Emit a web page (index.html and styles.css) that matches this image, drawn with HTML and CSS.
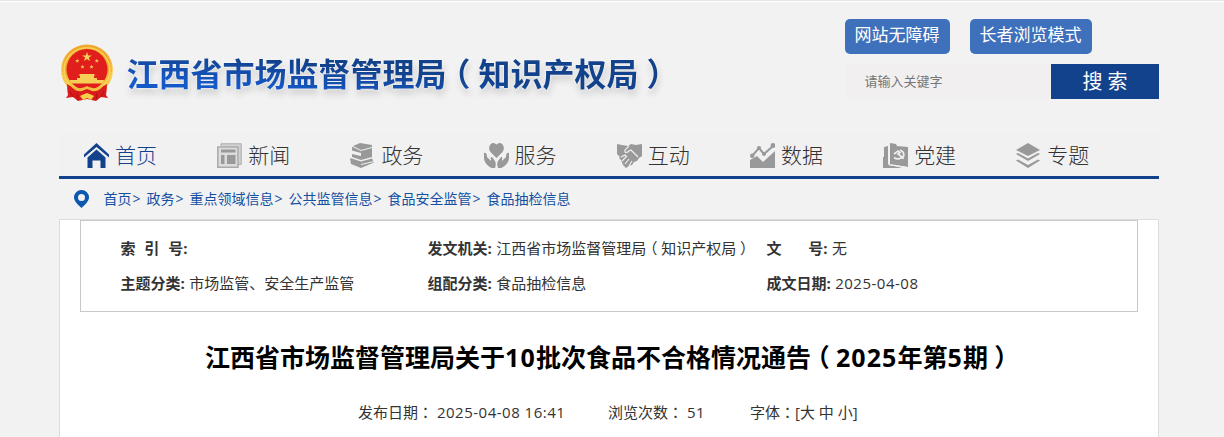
FILE: index.html
```html
<!DOCTYPE html>
<html lang="zh-CN">
<head>
<meta charset="utf-8">
<title>江西省市场监督管理局</title>
<link rel="stylesheet" href="styles.css">
</head>
<body>
<div class="topline"></div>
<div class="page">
  <header class="header">
    <div class="brand">
      <svg class="emblem" viewBox="0 0 54 58">
        <defs>
          <radialGradient id="gold" cx=".5" cy=".4" r=".6"><stop offset=".7" stop-color="#f0a92c"/><stop offset=".86" stop-color="#fbd65c"/><stop offset="1" stop-color="#eeaa2e"/></radialGradient>
          <path id="star" d="M0-5 1.2-1.6 4.8-1.6 1.9.6 3 4 0 1.9-3 4-1.9.6-4.8-1.6-1.2-1.6z"/>
        </defs>
        <path d="M7 37 8 51 6 54 13 53 18 57 27 55 36 57 41 53 48 54 46 51 47 37z" fill="#d91b1b"/>
        <ellipse cx="27" cy="26" rx="26" ry="25.5" fill="url(#gold)"/>
        <ellipse cx="27" cy="26" rx="22.8" ry="22.3" fill="none" stroke="#f9cf55" stroke-width="1.500"/>
        <ellipse cx="27" cy="26" rx="24.500" ry="24" fill="none" stroke="#e9a42b" stroke-width=".6" stroke-dasharray="2 1.5"/>
        <circle cx="27" cy="25.5" r="20.5" fill="#e01f1c"/>
        <g fill="#f6cf57">
          <use href="#star" x="27" y="13"/>
          <use href="#star" transform="translate(17.3 17) scale(.45)"/>
          <use href="#star" transform="translate(36.8 17) scale(.45)"/>
          <use href="#star" transform="translate(22.5 23) scale(.45)"/>
          <use href="#star" transform="translate(31.5 23) scale(.45)"/>
          <path d="M20 30h14l1.500 1.500h-1.500v2.500h3v2H17v-2h3v-2.500h-1.500zM9.500 36h35l-2 3.500h-31z"/>
        </g>
        <path d="M7 40c5 3 10 6 17 5l3-2 3 2c7 1 12-2 17-5l-1 11c-5 2-10 2-14 1l-5 3-5-3c-4 1-9 1-14-1z" fill="#d91c1b"/>
        <path d="M9 39c5 5 11 7 18 3 7 4 13 2 18-3-3 6-8 9-13 8l-5-2-5 2c-5 1-10-2-13-8z" fill="#f3bd42"/>
        <path d="M22 51l5-2 5 2 2 1-3 4-4-2-4 2-3-4z" fill="#f7cf4a"/>
        <path d="M10 47l3 6M44 47l-3 6M17 49l1 7M37 49l-1 7" stroke="#a91515" fill="none"/>
      </svg>
      <h1 class="site-name">江西省市场监督管理局<span class="paren">（</span>知识产权局<span class="paren">）</span></h1>
    </div>
    <div class="tools">
      <div class="modes"><a class="mode">网站无障碍</a><a class="mode">长者浏览模式</a></div>
      <div class="search"><span class="search-input">请输入关键字</span><span class="search-button">搜 索</span></div>
    </div>
  </header>

  <nav class="nav">
    <a class="nav-item active"><svg class="icon" viewBox="0 0 25 25"><path d="M12.500 0 25 11.500 25 14.500 12.500 4 0 14.500 0 11.500z"/><path d="M12.500 6.500 21.500 14.500V25H16.500V17.500H8.500V25H3.500V14.500z"/></svg>首页</a>
    <a class="nav-item"><svg class="icon" viewBox="0 0 25 25"><path d="M4 3V.8h20.200v20.700H21" fill="#d2d2d2" stroke="#aaa"/><path d="M.8 4h20.200v20.200H.8z" fill="#dcdcdc" stroke="#aaa" stroke-width="1.500"/><path d="M4 6.500h14.500v3H4zM4 12h3.500v9H4zM10 12h8.500v9H10z"/></svg>新闻</a>
    <a class="nav-item"><svg class="icon" viewBox="0 0 25 25"><path d="M10 0 22 2v12L11 17 2 14v-3l9 2V10L2 7.500V5l1-2z"/><path d="M3 3.500 11 7.500l11-3M2 8.500l9 3" fill="none" stroke="#f1f1f1"/><path d="M0 15l11 3.500 11-3 2 4-13 5.500L1 21z"/><path d="M11 21.500 24 18.500" stroke="#f1f1f1"/></svg>政务</a>
    <a class="nav-item"><svg class="icon" viewBox="0 0 25 25"><path d="M12.500 15 6.500 9C3.500 5 6-.5 10 0l2.500 1.500L15 0c4-.5 6.500 5 3.500 9z"/><path d="M0 10c2-1 3 1 3 4l4 4c0-3-1-4 1-4l3 4c1 2 1 4 0 7H8c-3-1-8-5-8-10zM25 10c-2-1-3 1-3 4l-4 4c0-3 1-4-1-4l-3 4c-1 2-1 4 0 7h3c3-1 8-5 8-10z"/></svg>服务</a>
    <a class="nav-item"><svg class="icon" viewBox="0 0 25 25"><path d="M0 1 5 2l6 1 3-2 5 1 6-1v12l-3 2-2 3-3 1-2 3-3 1-3 2-3-3-2-5-2-2 1-1-3-3z"/><path d="M12 3 8 7c-1 3 2 3 4 1l2-1 7 7M4 14l4-2 2 2M5 18l4-4M8 21l4-5M12 23l3-5" fill="none" stroke="#f1f1f1" stroke-width="1.100"/></svg>互动</a>
    <a class="nav-item"><svg class="icon" viewBox="0 0 25 25"><path d="M0 25V17l7-4 6 6L25 8v17z"/><path d="M2 13 9 5l5 6L23 3" fill="none" stroke="#999" stroke-width="2"/><circle cx="2.200" cy="12.800" r="2.200"/><circle cx="9" cy="5" r="2"/><circle cx="14" cy="11" r="2"/><circle cx="23" cy="2.500" r="2.400"/></svg>数据</a>
    <a class="nav-item"><svg class="icon" viewBox="0 0 25 25"><path d="M0 25V14h1V4l4-1v18l14 4zM7 0l6 1 1 2 11 1v20L7 21z"/><path d="M6 1v21l19 2.500" fill="none" stroke="#f1f1f1"/><path d="M11 11l4-3 2 1.500-2 1.500 6 4.500M17 7c5 2 5 7 1 8-2 1-5 1-7-.5" fill="none" stroke="#f1f1f1" stroke-width="1.600"/></svg>党建</a>
    <a class="nav-item"><svg class="icon" viewBox="0 0 25 25"><path d="M12 0 24 7 12 13 0 7zM0 11l2-1 10 5.500L22 10l2 1-12 7zM0 17.500l2-1 10 5.500 10-5.500 2 1L12 25z"/></svg>专题</a>
  </nav>

  <div class="crumbs">
    <svg class="pin" viewBox="0 0 15 18"><path fill-rule="evenodd" d="M7.500 0A7.400 7.400 0 0 0 0 7.500C0 11 4 15 7.500 18 11 15 15 11 15 7.500A7.400 7.400 0 0 0 7.500 0zm0 4a3.500 3.500 0 1 1 0 7 3.500 3.500 0 0 1 0-7z"/></svg>
    <a>首页</a><i>&gt;</i><a>政务</a><i>&gt;</i><a>重点领域信息</a><i>&gt;</i><a>公共监管信息</a><i>&gt;</i><a>食品安全监管</a><i>&gt;</i><a>食品抽检信息</a>
  </div>

  <main class="article">
    <div class="info">
      <div><b class="spread wide"><span>索</span><span>引</span><span>号:</span></b></div>
      <div><b>发文机关:</b> 江西省市场监督管理局<span class="paren">（</span>知识产权局<span class="paren">）</span></div>
      <div><b class="spread"><span>文</span><span>号:</span></b> 无</div>
      <div><b>主题分类:</b> 市场监管、安全生产监管</div>
      <div><b>组配分类:</b> 食品抽检信息</div>
      <div><b>成文日期:</b> <span class="num">2025-04-08</span></div>
    </div>
    <h2 class="title">江西省市场监督管理局关于<span class="num">10</span>批次食品不合格情况通告<span class="paren">（</span><span class="num">2025</span>年第<span class="num">5</span>期<span class="paren">）</span></h2>
    <div class="meta">
      <span class="date">发布日期<span class="colon" lang="zh-TW">：</span> <span class="num">2025-04-08 16:41</span></span>
      <span class="views">浏览次数<span class="colon" lang="zh-TW">：</span> <span class="num">51</span></span>
      <span>字体<span class="colon" lang="zh-TW">：</span>[大 中 小]</span>
    </div>
  </main>
</div>
</body>
</html>
```
FILE: styles.css
```css
* { box-sizing: border-box; }
body {
  margin: 0;
  height: 437px;
  overflow: hidden;
  background: #f2f2f2;
  color: #333;
  font-family: "Open Sans", "Noto Sans CJK SC", sans-serif;
}
.topline { height: 2px; background: #e1e6eb; border-bottom: 1px solid #fff; }
.page { width: 1100px; margin-left: 59px; }

.header { display: flex; justify-content: space-between; height: 130px; }
.brand { display: flex; padding: 42px 0 0 1px; }
.emblem { width: 54px; height: 58px; }
.site-name {
  height: 60px;
  margin: 0 0 0 12.500px;
  font-size: 32px;
  line-height: 60px;
  font-weight: 700;
  white-space: nowrap;
  color: transparent;
  background: linear-gradient(185deg, #13428c 48%, #1558c8 74%);
  background-clip: text;
  -webkit-background-clip: text;
  filter: drop-shadow(0 0 1px #fff) drop-shadow(1px 5px 3px rgba(0, 0, 0, .14));
}
.tools { width: 314px; padding-top: 17px; }
.modes { display: flex; gap: 20px; }
.mode {
  height: 35px;
  padding: 0 10.500px 0 9.500px;
  border-radius: 5px;
  background: #3f70bb;
  color: #fff;
  font-size: 17px;
  line-height: 32px;
}
.search { display: flex; height: 35px; margin-top: 10px; }
.search-input { width: 206px; padding-left: 19.500px; background: #f1eff0; color: #757575; font-size: 13px; line-height: 35px; }
.search-button { flex: 1; background: #13428c; color: #fff; font-size: 20px; line-height: 35px; text-align: center; }

.nav {
  display: grid;
  grid-template-columns: repeat(8, 133.2px);
  height: 47px;
  padding-left: 25px;
  border-bottom: 3px solid #13428c;
  background: #f1f1f1;
}
.nav-item { display: flex; align-items: flex-start; gap: 6px; padding-top: 11px; font-size: 21px; font-weight: 300; line-height: 25px; }
.icon { width: 25px; height: 25px; fill: #999; }
.active { color: #13428c; }
.active .icon { fill: #13428c; }

.crumbs { display: flex; height: 40px; padding-left: 15px; color: #1250a2; font-size: 14px; line-height: 40px; }
.pin { width: 15px; height: 18px; margin: 11px 14.400px 0 0; fill: #0a58b0; }
.crumbs i { width: 15px; padding-left: 1px; font-style: normal; }

.article { height: 218px; padding: 0 20px; border: 1px solid #ddd; border-bottom: 0; background: #fff; }
.info {
  display: grid;
  grid-template-columns: 307px 339px 1fr;
  grid-template-rows: 35px 35px;
  height: 92px;
  padding: 10px 0 0 39.500px;
  border: 1px solid #c8c8c8;
  font-size: 15px;
  line-height: 35px;
  word-spacing: .5px;
  white-space: nowrap;
}
.spread { display: inline-flex; justify-content: space-between; width: 61px; }
.wide { width: 67px; }
.num { letter-spacing: .5px; }
.paren { margin: 0 .25em; font-feature-settings: "halt"; }
.title { margin: 25px 0 0; color: #000; font-size: 25px; line-height: 40px; text-align: center; white-space: nowrap; }
.title .num { letter-spacing: 1.100px; }
.meta { display: flex; padding: 20px 0 0 278px; font-size: 15px; line-height: 30px; white-space: nowrap; }
.date { width: 250px; }
.views { width: 142px; }
.colon { font-family: "Noto Sans CJK TC", sans-serif; }
```
